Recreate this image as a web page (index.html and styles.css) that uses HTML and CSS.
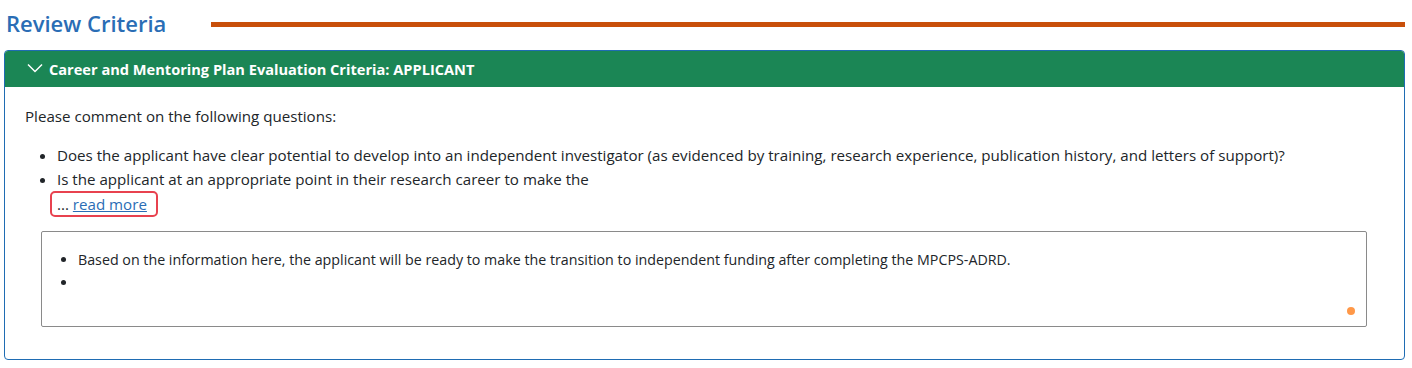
FILE: index.html
```html
<!DOCTYPE html>
<html lang="en">
<head>
<meta charset="utf-8">
<title>Review Criteria</title>
<link rel="stylesheet" href="styles.css">
</head>
<body>
<div class="section-head">
  <h2 class="section-title">Review Criteria</h2>
  <div class="section-rule"></div>
</div>
<div class="card">
  <div class="card-header">
    <svg class="chevron" width="16" height="10" viewBox="0 0 16 10"><path d="M1 1.5 L8 8.5 L15 1.5" fill="none" stroke="#fff" stroke-width="1.5"/></svg>
    <span class="card-title">Career and Mentoring Plan Evaluation Criteria: APPLICANT</span>
  </div>
  <div class="card-body">
    <p class="intro">Please comment on the following questions:</p>
    <ul class="questions">
      <li>Does the applicant have clear potential to develop into an independent investigator (as evidenced by training, research experience, publication history, and letters of support)?</li>
      <li>Is the applicant at an appropriate point in their research career to make the</li>
    </ul>
    <div class="more-row"><span class="more-box">... <a href="#" class="more-link">read more</a></span></div>
    <div class="editor">
      <ul class="editor-list">
        <li>Based on the information here, the applicant will be ready to make the transition to independent funding after completing the MPCPS-ADRD.</li>
        <li></li>
      </ul>
      <span class="status-dot"></span>
    </div>
  </div>
</div>
</body>
</html>
```
FILE: styles.css
```css
* { box-sizing: border-box; }
body {
  margin: 0;
  font-family: "Open Sans", "Noto Sans", sans-serif;
  color: #212529;
  background: #fff;
}
.section-head {
  display: flex;
  align-items: center;
  padding: 3px 7px 0 6px;
  height: 42px;
}
.section-title {
  margin: 0;
  font-size: 22px;
  font-weight: 600;
  color: #2a6db5;
}
.section-rule {
  flex: 1;
  height: 5px;
  background: #c84f0a;
  margin-left: 45px;
  margin-top: 4px;
}
.card {
  margin: 8px 7px 0 4px;
  border: 1px solid #1f6cb3;
  border-radius: 4px;
  overflow: hidden;
  height: 310px;
}
.card-header {
  background: #1b8655;
  height: 36px;
  display: flex;
  align-items: center;
  padding-left: 22px;
  color: #fff;
}
.chevron { margin-right: 6px; margin-top: -2px; }
.card-title {
  font-size: 14.6px;
  font-weight: 700;
}
.card-body {
  padding: 17px 37px 0 20px;
  font-size: 15.13px;
}
.intro {
  margin: 0 0 15px 0;
  line-height: 24px;
}
.questions {
  margin: 0;
  padding-left: 32px;
  line-height: 24px;
}
.more-row {
  padding-left: 25px;
  line-height: 22px;
}
.more-box {
  display: inline-block;
  border: 2px solid #e8424f;
  border-radius: 5px;
  padding: 0 9px 0 5px;
  height: 26px;
}
.more-link { color: #2a6db5; }
.editor {
  position: relative;
  margin: 14px 0 0 16px;
  height: 96px;
  border: 1px solid #8a8a8a;
  border-radius: 2px;
  padding: 16px 0 0 0;
  font-size: 14.26px;
}
.editor-list {
  margin: 0;
  padding-left: 36px;
  line-height: 23px;
}
.status-dot {
  position: absolute;
  right: 11px;
  bottom: 11px;
  width: 8px;
  height: 8px;
  border-radius: 50%;
  background: #ff9848;
}
```
